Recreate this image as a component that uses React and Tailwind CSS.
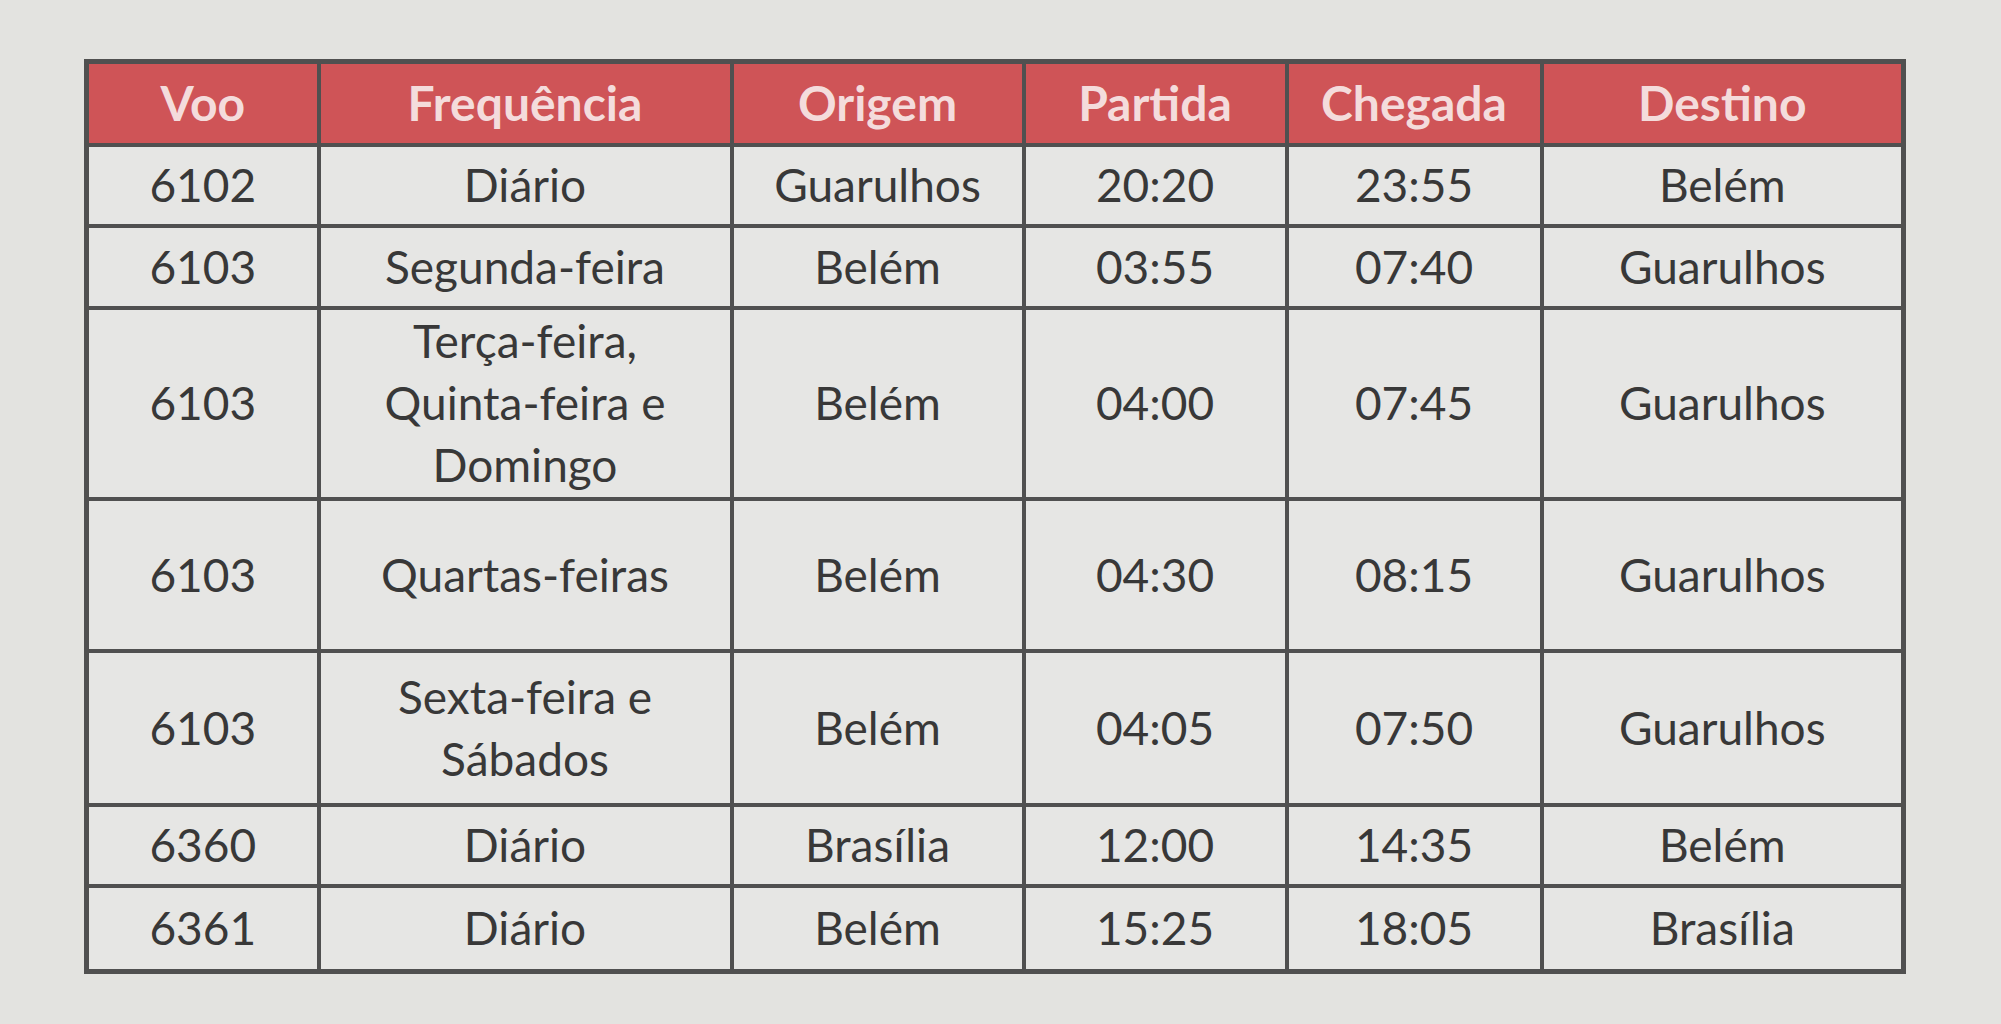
const COLS = [
  { label: 'Voo', width: 'w-[232px]' },
  { label: 'Frequência', width: 'w-[413px]' },
  { label: 'Origem', width: 'w-[292px]' },
  { label: 'Partida', width: 'w-[263px]' },
  { label: 'Chegada', width: 'w-[255px]' },
  { label: 'Destino', width: 'w-[362px]' },
];

const ROWS = [
  { h: 'h-[81px]', cells: ['6102', 'Diário', 'Guarulhos', '20:20', '23:55', 'Belém'] },
  { h: 'h-[82px]', cells: ['6103', 'Segunda-feira', 'Belém', '03:55', '07:40', 'Guarulhos'] },
  { h: 'h-[191px]', cells: ['6103', ['Terça-feira,', 'Quinta-feira e', 'Domingo'], 'Belém', '04:00', '07:45', 'Guarulhos'] },
  { h: 'h-[152px]', cells: ['6103', 'Quartas-feiras', 'Belém', '04:30', '08:15', 'Guarulhos'] },
  { h: 'h-[154px]', cells: ['6103', ['Sexta-feira e', 'Sábados'], 'Belém', '04:05', '07:50', 'Guarulhos'] },
  { h: 'h-[81px]', cells: ['6360', 'Diário', 'Brasília', '12:00', '14:35', 'Belém'] },
  { h: 'h-[86px]', cells: ['6361', 'Diário', 'Belém', '15:25', '18:05', 'Brasília'] },
];

export default function App() {
  return (
    <div className="min-h-screen w-full bg-[#e3e3e0] pl-[84px] pt-[59px] font-['Lato',sans-serif]">
      <table className="table-fixed border-collapse border-[5px] border-[#505050] bg-[#e6e6e4] text-[#383838]">
        <colgroup>
          {COLS.map((c) => (
            <col key={c.label} className={c.width} />
          ))}
        </colgroup>
        <thead>
          <tr className="h-[83px] bg-[#cf5457]">
            {COLS.map((c) => (
              <th
                key={c.label}
                className="border-[4px] border-[#505050] text-center align-middle text-[48px] font-bold leading-none text-[#f4dcdc]"
              >
                {c.label}
              </th>
            ))}
          </tr>
        </thead>
        <tbody>
          {ROWS.map((row, i) => (
            <tr key={i} className={row.h}>
              {row.cells.map((cell, j) => (
                <td
                  key={j}
                  className="border-[4px] border-[#505050] text-center align-middle text-[46px] leading-[62px]"
                >
                  {Array.isArray(cell)
                    ? cell.map((line) => <div key={line}>{line}</div>)
                    : cell}
                </td>
              ))}
            </tr>
          ))}
        </tbody>
      </table>
    </div>
  );
}
